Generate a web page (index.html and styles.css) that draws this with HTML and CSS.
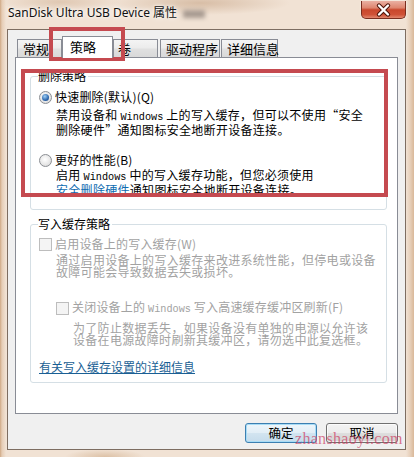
FILE: index.html
```html
<!DOCTYPE html>
<html lang="zh-CN">
<head>
<meta charset="utf-8">
<title>SanDisk Ultra USB Device 属性</title>
<link rel="stylesheet" href="styles.css">
</head>
<body>
<div class="window">
  <div class="titlebar">
    <div class="title">SanDisk Ultra USB Device 属性<span class="blur"></span></div>
    <div class="close">
      <svg width="43" height="18" viewBox="0 0 43 18">
        <path d="M17 4.5 L26 13.5 M26 4.5 L17 13.5" stroke="#4a1208" stroke-width="4.4" stroke-linecap="round"/>
        <path d="M17 4.5 L26 13.5 M26 4.5 L17 13.5" stroke="#ffffff" stroke-width="2.4" stroke-linecap="round"/>
      </svg>
    </div>
  </div>
  <div class="client">
    <div class="tabs">
      <div class="tab t1">常规</div>
      <div class="tab sel">策略</div>
      <div class="tab t3">卷</div>
      <div class="tab t4">驱动程序</div>
      <div class="tab t5">详细信息</div>
    </div>
    <div class="panel">
      <div class="group g1">
        <div class="legend">删除策略</div>
        <div class="opt o1"><span class="radio on"></span><span>快速删除(默认)(Q)</span></div>
        <div class="desc d1">禁用设备和 <span class="mono">Windows</span> 上的写入缓存，但可以不使用“安全<br>删除硬件”通知图标安全地断开设备连接。</div>
        <div class="opt o2"><span class="radio"></span><span>更好的性能(B)</span></div>
        <div class="desc d2">启用 <span class="mono">Windows</span> 中的写入缓存功能，但您必须使用<br><span class="link">安全删除硬件</span>通知图标安全地断开设备连接。</div>
      </div>
      <div class="group g2">
        <div class="legend">写入缓存策略</div>
        <div class="opt dis c1"><span class="chk"></span><span>启用设备上的写入缓存(W)</span></div>
        <div class="desc dis d3">通过启用设备上的写入缓存来改进系统性能，但停电或设备<br>故障可能会导致数据丢失或损坏。</div>
        <div class="opt dis c2"><span class="chk"></span><span>关闭设备上的 <span class="mono">Windows</span> 写入高速缓存缓冲区刷新(F)</span></div>
        <div class="desc dis d4">为了防止数据丢失，如果设备没有单独的电源以允许该<br>设备在电源故障时刷新其缓冲区，请勿选中此复选框。</div>
        <div class="more">有关写入缓存设置的详细信息</div>
      </div>
    </div>
    <div class="buttons">
      <div class="btn def">确定</div>
      <div class="btn">取消</div>
    </div>
  </div>
  <div class="mark m1"></div>
  <div class="mark m2"></div>
  <div class="watermark">zhanshaoyi.com</div>
</div>
</body>
</html>
```
FILE: styles.css
```css
body {
  margin: 0;
}

.window {
  position: relative;
  width: 414px;
  height: 457px;
  overflow: hidden;
  font-family: "Noto Sans CJK SC", sans-serif;
  color: #000;
  background:
    radial-gradient(ellipse 90px 12px at 200px 3px, rgba(185, 145, 110, 0.45), transparent),
    radial-gradient(ellipse 60px 10px at 60px 2px, rgba(190, 150, 115, 0.35), transparent),
    radial-gradient(ellipse 40px 8px at 105px 457px, rgba(200, 160, 120, 0.5), transparent),
    linear-gradient(90deg, #cfa884 0, #e6cdb6 2px, #f1e2d4 6px, #f1e2d4 406px, #e7d0bb 410px, #d9b899 414px);
}

.titlebar {
  height: 29px;
  display: flex;
  justify-content: space-between;
  align-items: flex-start;
}

.title {
  padding: 5px 0 0 8px;
  font-family: "Noto Sans", "Noto Sans CJK SC", sans-serif;
  font-size: 12px;
  line-height: 16px;
  color: #111;
  text-shadow: 0 0 6px #fff, 0 0 3px #fff;
  white-space: nowrap;
}

.blur {
  display: inline-block;
  width: 22px;
  height: 8px;
  margin-left: 6px;
  vertical-align: -1px;
  background: #a89b91;
  filter: blur(2px);
}

.close {
  width: 45px;
  height: 18px;
  margin: 1px 8px 0 0;
  box-sizing: border-box;
  border: 1px solid #7a2e20;
  border-top: 0;
  border-radius: 0 0 5px 5px;
  background: linear-gradient(#eab0a2 0, #de8670 40%, #c9472d 52%, #cf5238 80%, #e2866e 100%);
  box-shadow: 0 0 2px rgba(255, 255, 255, 0.8);
}

.close svg {
  display: block;
}

.client {
  margin-left: 7px;
  width: 399px;
  height: 421px;
  box-sizing: border-box;
  border: 1px solid #7d6d61;
  background: #f0f0f0;
}

.tabs {
  display: flex;
  align-items: flex-end;
  height: 27px;
  padding-left: 9px;
}

.tab {
  box-sizing: border-box;
  height: 18px;
  border: 1px solid #898c95;
  border-bottom: 0;
  background: linear-gradient(#f4f4f4, #ececec 45%, #e0e0e0 55%, #d9d9d9);
  font-size: 13px;
  line-height: 18px;
  padding-left: 5px;
  white-space: nowrap;
}

.t1 { width: 45px; }
.t3 { width: 45px; padding-left: 4px; }
.t4 { width: 60px; margin-left: 2px; }
.t5 { width: 57px; margin-left: 1px; padding-left: 5px; }

.tab.sel {
  width: 51px;
  height: 22px;
  margin-bottom: -1px;
  position: relative;
  z-index: 1;
  background: #fff;
  line-height: 19px;
  padding-left: 7px;
}

.panel {
  margin-left: 7px;
  width: 383px;
  height: 357px;
  box-sizing: border-box;
  border: 1px solid #898c95;
  background: #fff;
  padding: 18px 0 0 14px;
}

.group {
  width: 357px;
  box-sizing: border-box;
  border: 1px solid #d5dfe5;
  border-radius: 3px;
  padding-left: 8px;
}

.g1 { height: 134px; }
.g2 { height: 159px; margin-top: 14px; }

.legend {
  display: table;
  margin: -7px 0 0 -1px;
  padding-right: 2px;
  background: #fff;
  font-size: 12px;
  line-height: 12px;
  white-space: nowrap;
}

.opt {
  display: flex;
  align-items: center;
  gap: 3px;
  height: 12px;
  font-size: 12px;
  line-height: 12px;
  letter-spacing: 0.2px;
  white-space: nowrap;
}

.o1 { margin-top: 9px; }
.o2 { margin-top: 18px; }
.c1 { margin-top: 8px; }
.c2 { margin-top: 24px; margin-left: 17px; }

.desc {
  margin-left: 17px;
  font-size: 12px;
  line-height: 12px;
  letter-spacing: 0.3px;
  white-space: nowrap;
}

.d1 { margin-top: 6px; }
.d2 { margin-top: 3px; }
.d3 { margin-top: 4px; }
.d4 { margin-top: 8px; margin-left: 34px; }

.mono {
  font-family: "Liberation Mono", monospace;
  font-size: 10.2px;
  letter-spacing: 0;
}

.dis { color: #a2a2a2; }

.radio {
  flex: none;
  width: 13px;
  height: 13px;
  box-sizing: border-box;
  border-radius: 50%;
  border: 1px solid #8b8e93;
  background: radial-gradient(circle at 45% 40%, #ffffff, #e6e6e6 60%, #cdcdcd);
  display: flex;
  align-items: center;
  justify-content: center;
}

.radio.on::after {
  content: "";
  width: 7px;
  height: 7px;
  border-radius: 50%;
  background: radial-gradient(circle at 40% 35%, #9fd0f6, #2d67ad 60%, #163f78);
}

.chk {
  flex: none;
  width: 13px;
  height: 13px;
  box-sizing: border-box;
  border: 1px solid #bdbdbd;
  background: #f4f4f4;
}

.link {
  color: #0e6bb0;
  text-decoration: underline;
}

.more {
  margin-top: 15px;
  font-size: 12px;
  line-height: 12px;
  color: #1a5f94;
  text-decoration: underline;
  white-space: nowrap;
}

.buttons {
  display: flex;
  justify-content: flex-end;
  gap: 9px;
  margin-top: 9px;
  padding-right: 7px;
}

.btn {
  width: 72px;
  height: 20px;
  box-sizing: border-box;
  border: 1px solid #707070;
  border-radius: 3px;
  background: linear-gradient(#f3f3f3, #ececec 48%, #dedede 52%, #d2d2d2);
  box-shadow: inset 0 0 0 1px rgba(255, 255, 255, 0.7);
  font-size: 12.5px;
  line-height: 18px;
  text-align: center;
}

.btn.def {
  border-color: #3c7fb1;
  background: linear-gradient(#eef6fb, #e2eef6 48%, #d2e4f0 52%, #c6dcec);
  box-shadow: inset 0 0 0 1px #a8dcf6;
}

.mark {
  position: absolute;
  box-sizing: border-box;
  border: 4px solid #c54a50;
}

.m1 { left: 49px; top: 27px; width: 76px; height: 34px; }
.m2 { left: 21px; top: 69px; width: 367px; height: 128px; }

.watermark {
  position: absolute;
  left: 295px;
  top: 431px;
  font-family: "Liberation Serif", serif;
  font-size: 16px;
  line-height: 16px;
  letter-spacing: 0.3px;
  color: rgba(205, 60, 95, 0.7);
  white-space: nowrap;
}
```
